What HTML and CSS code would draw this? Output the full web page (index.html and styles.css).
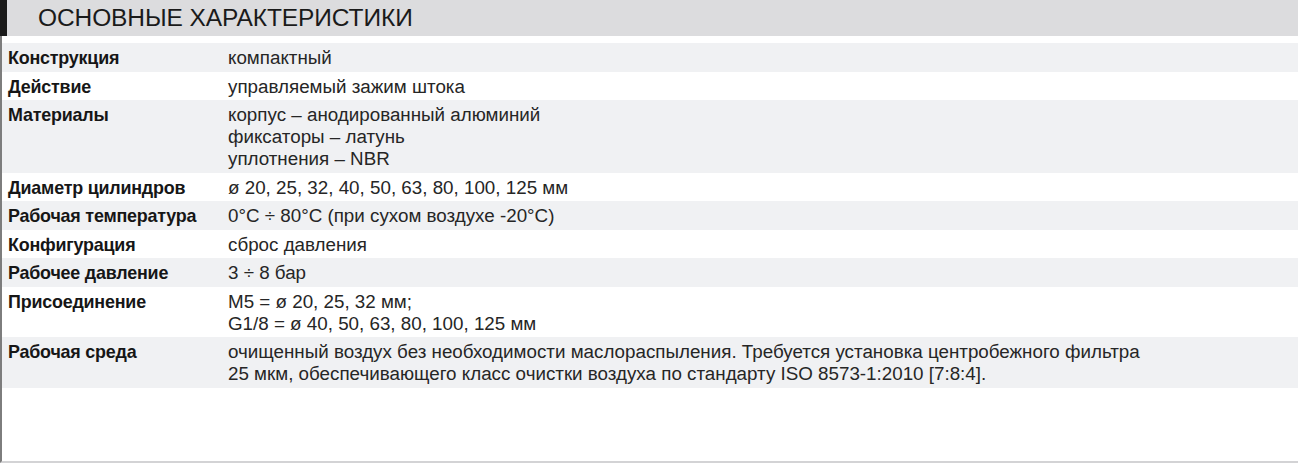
FILE: index.html
```html
<!DOCTYPE html>
<html lang="ru">
<head>
<meta charset="utf-8">
<title>Основные характеристики</title>
<link rel="stylesheet" href="styles.css">
</head>
<body>
<section class="panel">
  <h2 class="panel-title">ОСНОВНЫЕ ХАРАКТЕРИСТИКИ</h2>
  <div class="specs">
    <div class="row"><div class="label">Конструкция</div><div class="value">компактный</div></div>
    <div class="row"><div class="label">Действие</div><div class="value">управляемый зажим штока</div></div>
    <div class="row"><div class="label">Материалы</div><div class="value">корпус – анодированный алюминий<br>фиксаторы – латунь<br>уплотнения – NBR</div></div>
    <div class="row"><div class="label">Диаметр цилиндров</div><div class="value">ø 20, 25, 32, 40, 50, 63, 80, 100, 125 мм</div></div>
    <div class="row"><div class="label">Рабочая температура</div><div class="value">0°C ÷ 80°C (при сухом воздухе -20°C)</div></div>
    <div class="row"><div class="label">Конфигурация</div><div class="value">сброс давления</div></div>
    <div class="row"><div class="label">Рабочее давление</div><div class="value">3 ÷ 8 бар</div></div>
    <div class="row"><div class="label">Присоединение</div><div class="value">M5 = ø 20, 25, 32 мм;<br>G1/8 = ø 40, 50, 63, 80, 100, 125 мм</div></div>
    <div class="row"><div class="label">Рабочая среда</div><div class="value">очищенный воздух без необходимости маслораспыления. Требуется установка центробежного фильтра<br>25 мкм, обеспечивающего класс очистки воздуха по стандарту ISO 8573-1:2010 [7:8:4].</div></div>
  </div>
</section>
</body>
</html>
```

FILE: styles.css
```css
html, body {
  margin: 0;
  padding: 0;
  background: #ffffff;
}

body {
  font-family: "Liberation Sans", Arial, sans-serif;
  color: #1c1c1c;
}

.panel {
  width: 1296px;
  height: 461px;
  border-left: 2px solid #7d7d7d;
  border-bottom: 2px solid #d3d3d5;
  box-sizing: content-box;
}

.panel-title {
  margin: 0 0 0 -2px;
  height: 36px;
  box-sizing: border-box;
  background: #dcdcde;
  border-left: 7px solid #1a1a1a;
  padding-left: 31px;
  font-weight: 400;
  font-size: 24.5px;
  line-height: 36px;
  color: #1a1a1a;
  letter-spacing: -0.1px;
}

.specs {
  margin-top: 7px;
  display: flex;
  flex-direction: column;
}

.row {
  display: grid;
  grid-template-columns: 220px 1fr;
  padding: 4px 0 2.5px 6px;
  line-height: 22px;
}

.row:nth-child(odd) {
  background: #f0f1f3;
}

.label {
  font-size: 17.9px;
  font-weight: 700;
  letter-spacing: -0.2px;
  color: #161616;
}

.value {
  font-size: 18.8px;
  color: #262626;
}
```
